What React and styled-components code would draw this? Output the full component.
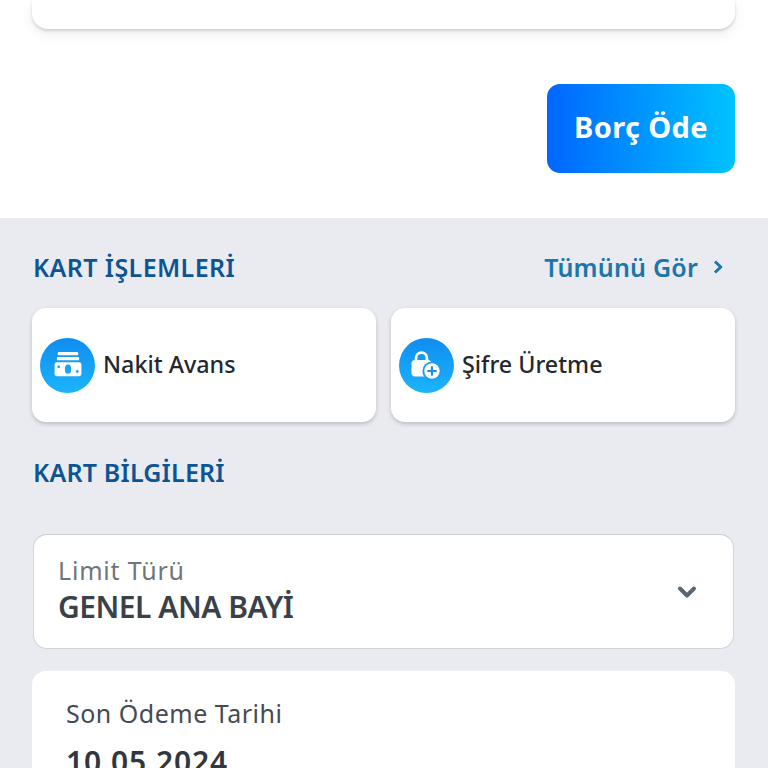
import React from "react";
import styled, { createGlobalStyle } from "styled-components";
import { ChevronDown } from "lucide-react";

const GlobalStyle = createGlobalStyle`
  html, body {
    margin: 0;
    height: 768px;
    overflow: hidden;
    background: #e9ebf1;
    font-family: "Noto Sans", "Open Sans", sans-serif;
  }
`;

function CashIcon() {
  return (
    <svg width="28" height="26" viewBox="0 0 30 28" fill="none">
      <rect x="4" y="0" width="22" height="3.500" rx="1" fill="#fff" />
      <rect x="3" y="5.500" width="24" height="3.500" rx="1" fill="#fff" />
      <path
        fillRule="evenodd"
        d="M3 11h24a2.500 2.500 0 0 1 2.500 2.500v10a2.500 2.500 0 0 1-2.500 2.500H3a2.500 2.500 0 0 1-2.500-2.500v-10A2.500 2.500 0 0 1 3 11zm12 2.500a3.400 5 0 1 0 0 10a3.400 5 0 0 0 0-10zM5 14.500a1.500 1.500 0 1 0 0 3a1.500 1.500 0 0 0 0-3zm20 5a1.500 1.500 0 1 0 0 3a1.500 1.500 0 0 0 0-3z"
        fill="#fff"
      />
    </svg>
  );
}

function LockPlusIcon() {
  return (
    <svg width="31" height="31" viewBox="0 0 34 34" fill="none">
      <path
        d="M5.500 13V9a6 6 0 0 1 12 0v4"
        stroke="#fff"
        strokeWidth="3"
        fill="none"
      />
      <rect x="0.500" y="11" width="22" height="18" rx="4" fill="#fff" />
      <circle cx="23" cy="23" r="10.500" fill="#1a9cf4" />
      <circle cx="23" cy="23" r="8.500" fill="#fff" />
      <path
        d="M23 18.800v8.400M18.800 23h8.400"
        stroke="#1a8fe8"
        strokeWidth="2.400"
        strokeLinecap="round"
      />
    </svg>
  );
}

function BoldChevron() {
  return (
    <svg width="11" height="14" viewBox="0 0 11 14" fill="none">
      <path
        d="M2 1.500 7.800 7 2 12.500"
        stroke="#1a76ab"
        strokeWidth="3"
        strokeLinejoin="round"
      />
    </svg>
  );
}

export default function App() {
  return (
    <>
      <GlobalStyle />
      <Screen>
        <TopSection>
          <SummaryCard>
            <SummaryValue>1.250,00 TL</SummaryValue>
          </SummaryCard>
          <PayRow>
            <PayButton>Borç Öde</PayButton>
          </PayRow>
        </TopSection>
        <GraySection>
          <HeadRow>
            <SectionTitle>KART İŞLEMLERİ</SectionTitle>
            <SeeAll>
              Tümünü Gör
              <BoldChevron />
            </SeeAll>
          </HeadRow>
          <ActionGrid>
            <ActionCard>
              <ActionIcon>
                <CashIcon />
              </ActionIcon>
              <ActionLabel>Nakit Avans</ActionLabel>
            </ActionCard>
            <ActionCard>
              <ActionIcon>
                <LockPlusIcon />
              </ActionIcon>
              <ActionLabel>Şifre Üretme</ActionLabel>
            </ActionCard>
          </ActionGrid>
          <InfoTitle>KART BİLGİLERİ</InfoTitle>
          <SelectBox>
            <SelectText>
              <SelectLabel>Limit Türü</SelectLabel>
              <SelectValue>GENEL ANA BAYİ</SelectValue>
            </SelectText>
            <ChevronDown size={28} strokeWidth={3.400} color="#5b6672" />
          </SelectBox>
          <InfoCard>
            <InfoLabel>Son Ödeme Tarihi</InfoLabel>
            <InfoValue>10.05.2024</InfoValue>
          </InfoCard>
        </GraySection>
      </Screen>
    </>
  );
}

const Screen = styled.div`
  width: 768px;
  height: 768px;
  overflow: hidden;
  display: flex;
  flex-direction: column;
`;

const TopSection = styled.section`
  height: 218px;
  flex-shrink: 0;
  background: #fff;
  padding: 0 33px 0 32px;
  box-sizing: border-box;
  overflow: hidden;
`;

const SummaryCard = styled.div`
  height: 29px;
  background: #fff;
  border-radius: 0 0 16px 16px;
  box-shadow: 0 2px 3px rgba(0, 0, 0, 0.14), 0 5px 14px rgba(0, 0, 0, 0.07);
  overflow: hidden;
`;

const SummaryValue = styled.div`
  margin: -35px 0 0 34px;
  font-size: 30px;
  font-weight: 600;
  line-height: 40px;
  color: #31373d;
`;

const PayRow = styled.div`
  display: flex;
  justify-content: flex-end;
  margin-top: 55px;
`;

const PayButton = styled.button`
  width: 188px;
  height: 89px;
  border: 0;
  border-radius: 13px;
  background: linear-gradient(90deg, #0066ff, #00c3ff);
  color: #fff;
  font-family: inherit;
  font-size: 29px;
  font-weight: 700;
  letter-spacing: 0.4px;
  padding: 0 0 4px;
`;

const GraySection = styled.section`
  flex: 1;
  background: #e9ebf1;
  padding: 0 33px 0 32px;
`;

const HeadRow = styled.div`
  height: 90px;
  box-sizing: border-box;
  display: flex;
  align-items: center;
  justify-content: space-between;
  padding: 8px 11px 0 1px;
`;

const SectionTitle = styled.h2`
  margin: 0;
  font-size: 25px;
  font-weight: 600;
  letter-spacing: 0.4px;
  color: #0d5592;
`;

const SeeAll = styled.a`
  display: flex;
  align-items: center;
  gap: 15px;
  font-size: 25px;
  font-weight: 600;
  letter-spacing: 0.2px;
  color: #1a76ab;
`;

const ActionGrid = styled.div`
  display: grid;
  grid-template-columns: 344px 344px;
  gap: 15px;
`;

const ActionCard = styled.div`
  height: 114px;
  background: #fff;
  border-radius: 14px;
  box-shadow: 0 2px 4px rgba(0, 0, 0, 0.2);
  display: flex;
  align-items: center;
  gap: 8px;
  padding-left: 8px;
`;

const ActionIcon = styled.div`
  width: 55px;
  height: 55px;
  flex-shrink: 0;
  border-radius: 50%;
  background: linear-gradient(180deg, #0f8df0, #1cb4fb);
  display: flex;
  align-items: center;
  justify-content: center;
`;

const ActionLabel = styled.span`
  font-size: 23.300px;
  font-weight: 500;
  margin-bottom: 3px;
  color: #24282c;
`;

const InfoTitle = styled(SectionTitle)`
  margin: 31px 0 43px 1px;
  line-height: 38px;
  letter-spacing: 0.2px;
`;

const SelectBox = styled.div`
  height: 115px;
  box-sizing: border-box;
  margin: 0 1px;
  background: #fff;
  border: 1px solid #cfd3da;
  border-top-color: #c8ccd3;
  border-radius: 14px;
  display: flex;
  align-items: center;
  justify-content: space-between;
  padding: 0 32px 0 24px;
`;

const SelectText = styled.div`
  display: flex;
  flex-direction: column;
  margin-top: -3px;
`;

const SelectLabel = styled.span`
  font-size: 25px;
  line-height: 34px;
  letter-spacing: 0.8px;
  color: #6f757c;
`;

const SelectValue = styled.span`
  font-size: 30px;
  font-weight: 600;
  line-height: 40px;
  letter-spacing: -0.5px;
  color: #3a4149;
`;

const InfoCard = styled.div`
  margin-top: 22px;
  background: #fff;
  border-radius: 14px;
  padding: 23px 34px;
`;

const InfoLabel = styled.div`
  font-size: 25px;
  line-height: 38px;
  letter-spacing: 0.5px;
  color: #454b52;
`;

const InfoValue = styled.div`
  margin-top: 10px;
  font-size: 30px;
  font-weight: 600;
  line-height: 40px;
  letter-spacing: 0.8px;
  color: #31373d;
`;
